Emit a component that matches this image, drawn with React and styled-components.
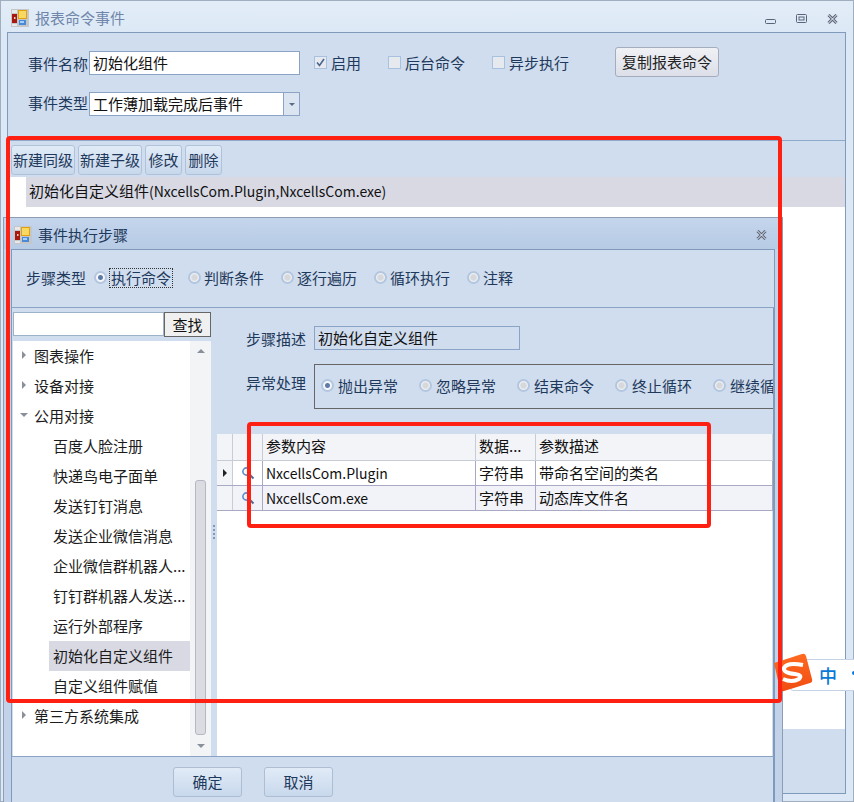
import React from "react";
import styled, { createGlobalStyle } from "styled-components";

const GlobalStyle = createGlobalStyle`
  html, body { margin: 0; padding: 0; background: #dfeaf6; }
  * { box-sizing: border-box; }
`;

const font = `"Noto Sans CJK SC", "Noto Sans", sans-serif`;

const Desktop = styled.div`
  position: relative;
  width: 854px;
  height: 802px;
  overflow: hidden;
  font-family: ${font};
  font-size: 15px;
  color: #1e395b;
`;

const Latin = styled.span`
  font-size: 14px;
`;

/* main window */
const MainWindow = styled.div`
  width: 854px;
  height: 802px;
  display: flex;
  flex-direction: column;
  background: linear-gradient(#e2edf8, #dce8f5 32px);
  border: 1px solid #a0aec0;
  padding: 0 7px 7px 6px;
`;

const TitleBar = styled.div`
  height: 31px;
  display: flex;
  align-items: center;
  gap: 6px;
  padding: 2px 0 0 4px;
  flex-shrink: 0;
  color: #6f86aa;
`;

const TitleSpacer = styled.div`
  flex: 1;
`;

const WinButtons = styled.div`
  display: flex;
  align-items: center;
  gap: 20px;
  padding-right: 8px;
  margin-top: 2px;
`;

const Frame = styled.div`
  flex: 1;
  display: flex;
  flex-direction: column;
  border: 1px solid #7f9aba;
  border-top: 0;
  min-height: 0;
`;

const TopPanel = styled.div`
  height: 109px;
  background: #d0ddee;
  border-top: 1px solid #7f9aba;
  border-bottom: 1px solid #8faac8;
  padding: 16px 0 0 20px;
  display: flex;
  flex-direction: column;
  gap: 15px;
`;

const Row = styled.div`
  display: flex;
  align-items: center;
`;

const Label = styled.span`
  white-space: nowrap;
  flex-shrink: 0;
  width: ${(p) => p.$w || 61}px;
  margin-top: ${(p) => -(p.$up || 0)}px;
  margin-bottom: ${(p) => p.$up || 0}px;
`;

const TextBox = styled.div`
  height: 24px;
  width: ${(p) => p.$w}px;
  flex-shrink: 0;
  background: ${(p) => p.$bg || "#fff"};
  border: 1px solid #8ba3c4;
  color: #111;
  line-height: 22px;
  padding-left: 3px;
  white-space: nowrap;
  overflow: hidden;
`;

const Combo = styled(TextBox)`
  display: flex;
  padding-right: 0;
  justify-content: space-between;
`;

const ComboArrow = styled.div`
  width: 16px;
  border-left: 1px solid #8ba3c4;
  background: #dbe5f2;
  display: flex;
  align-items: center;
  justify-content: center;
`;

const Caret = styled.i`
  width: 0;
  height: 0;
  border-left: 3px solid transparent;
  border-right: 3px solid transparent;
  border-top: 3px solid #5a6b85;
`;

const CheckItem = styled.div`
  display: flex;
  align-items: center;
  gap: 4px;
  margin: -1px 0 1px ${(p) => p.$ml}px;
  white-space: nowrap;
`;

const CheckBox = styled.div`
  width: 13px;
  height: 13px;
  border: 1px solid #a9c1e0;
  background: #e6e9ee;
  display: flex;
  align-items: center;
  justify-content: center;
`;

const CopyButton = styled.div`
  margin-left: 46px;
  margin-top: -2px;
  width: 104px;
  height: 30px;
  border: 1px solid #a5adbd;
  border-radius: 3px;
  background: linear-gradient(#f0f1f5, #dcdfe8);
  color: #222;
  display: flex;
  align-items: center;
  justify-content: center;
  padding-bottom: 2px;
`;

const ToolBar = styled.div`
  height: 36px;
  background: #d0ddee;
  display: flex;
  align-items: center;
  gap: 3px;
  padding: 2px 0 0 3px;
  flex-shrink: 0;
`;

const ToolButton = styled.div`
  height: 30px;
  border: 1px solid #b0c2da;
  border-radius: 3px;
  background: linear-gradient(#e1ebf7, #c8d8ec);
  display: flex;
  align-items: center;
  justify-content: center;
  padding-bottom: 2px;
  white-space: nowrap;
  width: ${(p) => p.$w}px;
`;

const EventList = styled.div`
  flex: 1;
  background: #fff;
  min-height: 0;
  display: flex;
  flex-direction: column;
`;

const EventRow = styled.div`
  margin-left: 18px;
  height: 30px;
  line-height: 28px;
  padding-left: 3px;
  background: #d8d9e3;
  color: #111;
`;

const FooterPanel = styled.div`
  height: 64px;
  background: #d0ddee;
  flex-shrink: 0;
`;

/* dialog over the main window */
const Dialog = styled.div`
  position: absolute;
  left: 3px;
  top: 217px;
  width: 780px;
  height: 600px;
  background: #c2d3e9;
  border: 1px solid #8c9db4;
  padding: 0 7px;
  display: flex;
  flex-direction: column;
`;

const DialogTitle = styled.div`
  height: 31px;
  flex-shrink: 0;
  margin: 0 -7px;
  padding: 2px 15px 0 10px;
  display: flex;
  align-items: center;
  gap: 6px;
  background: linear-gradient(#c4d5ec, #b7cbe5);
`;

const StepPanel = styled.div`
  height: 59px;
  flex-shrink: 0;
  background: #d0ddee;
  border: 1px solid #7f9aba;
  border-bottom: 1px solid #8ba3c4;
  display: flex;
  align-items: center;
  padding: 0 0 2px 14px;
`;

const RadioItem = styled.div`
  display: flex;
  align-items: center;
  gap: ${(p) => p.$gap || 3}px;
  margin-left: ${(p) => p.$ml}px;
  white-space: nowrap;
  flex-shrink: 0;
`;

const Radio = styled.div`
  width: 13px;
  height: 13px;
  border-radius: 50%;
  border: 2px solid #b3c6df;
  background: radial-gradient(circle, ${(p) => (p.$on ? "#5f7ca8 0 2px, #f4f6fa 3px" : "#d6d8dc 0 2.5px, #eef0f4 4px")});
  flex-shrink: 0;
`;

const FocusText = styled.span`
  outline: 1px dotted #333;
  outline-offset: 0;
  padding: 0 1px;
  line-height: 18px;
`;

const Body = styled.div`
  display: flex;
  min-height: 0;
  height: 449px;
  flex: none;
  background: #d0ddee;
  border-left: 1px solid #7f9aba;
  border-right: 2px solid #7f9aba;
  border-bottom: 1px solid #8ba3c4;
  padding-left: 1px;
`;

const LeftPane = styled.div`
  width: 198px;
  display: flex;
  flex-direction: column;
  padding-top: 4px;
  flex-shrink: 0;
`;

const SearchRow = styled.div`
  display: flex;
  height: 25px;
  margin-bottom: 4px;
`;

const SearchInput = styled.div`
  width: 151px;
  height: 24px;
  background: #fff;
  border: 1px solid #9fb2cc;
`;

const SearchButton = styled.div`
  width: 47px;
  height: 25px;
  background: #f0f0f0;
  border: 1px solid #666;
  color: #111;
  display: flex;
  align-items: center;
  justify-content: center;
  padding-bottom: 1px;
`;

const TreeBox = styled.div`
  flex: 1;
  display: flex;
  background: #fff;
  min-height: 0;
`;

const TreeList = styled.div`
  flex: 1;
  min-width: 0;
`;

const TreeItem = styled.div`
  height: 30px;
  display: flex;
  align-items: center;
  color: #1c1c1c;
  white-space: nowrap;
  margin-left: ${(p) => (p.$child ? 36 : 0)}px;
  padding-left: ${(p) => (p.$child ? 4 : 0)}px;
  padding-bottom: 2px;
  background: ${(p) => (p.$sel ? "#d8d9e3" : "transparent")};
`;

const Twist = styled.span`
  width: 21px;
  display: flex;
  justify-content: center;
  padding-left: 1px;
`;

const ArrowRight = styled.i`
  width: 0;
  height: 0;
  border-top: 4px solid transparent;
  border-bottom: 4px solid transparent;
  border-left: 4px solid ${(p) => p.$c || "#8a8f9c"};
`;

const ArrowDown = styled.i`
  width: 0;
  height: 0;
  border-left: 4px solid transparent;
  border-right: 4px solid transparent;
  border-top: 4px solid #8a8f9c;
`;

const ScrollBar = styled.div`
  width: 21px;
  flex-shrink: 0;
  background: #f3f4f6;
  display: flex;
  flex-direction: column;
  align-items: center;
  padding: 8px 0;
`;

const ArrowUp = styled.i`
  width: 0;
  height: 0;
  border-left: 4px solid transparent;
  border-right: 4px solid transparent;
  border-bottom: 4px solid #8a8f9c;
`;

const Thumb = styled.div`
  width: 11px;
  height: 255px;
  margin-top: 127px;
  margin-bottom: 9px;
  background: #dbdce2;
  border: 1px solid #b4b8c4;
  border-radius: 3px;
`;

const Splitter = styled.div`
  width: 6px;
  flex-shrink: 0;
  display: flex;
  flex-direction: column;
  align-items: center;
  justify-content: center;
  gap: 2px;
`;

const Dot = styled.i`
  width: 2px;
  height: 2px;
  background: #7f9aba;
`;

const RightPane = styled.div`
  flex: 1;
  min-width: 0;
  display: flex;
  flex-direction: column;
  overflow: hidden;
`;

const FieldRow = styled.div`
  display: flex;
  align-items: center;
  margin: 18px 0 0 29px;
  flex-shrink: 0;
`;

const GroupRow = styled(FieldRow)`
  margin-top: 14px;
`;

const GroupBox = styled.div`
  width: 460px;
  height: 45px;
  flex-shrink: 0;
  border: 1px solid #666;
  border-right: 0;
  display: flex;
  align-items: center;
  padding: 0 0 2px 6px;
  overflow: hidden;
`;

const Grid = styled.div`
  flex: 1;
  margin-top: 25px;
  background: #fff;
  margin-right: 1px;
  display: flex;
  flex-direction: column;
`;

const GridRow = styled.div`
  display: grid;
  grid-template-columns: 16px 30px 213px 60px 1fr;
  height: ${(p) => p.$h}px;
  flex-shrink: 0;
  background: ${(p) => p.$bg};
  border-bottom: 1px solid ${(p) => p.$line};
  width: 556px;
`;

const Cell = styled.div`
  display: flex;
  align-items: center;
  justify-content: ${(p) => (p.$center ? "center" : "flex-start")};
  padding-left: ${(p) => (p.$center ? 0 : 3)}px;
  padding-bottom: ${(p) => p.$pb || 0}px;
  border-right: 1px solid ${(p) => p.$line};
  background: ${(p) => p.$bg || "transparent"};
  color: #111;
  white-space: nowrap;
  overflow: hidden;
`;

const DialogFooter = styled.div`
  flex: 1;
  display: flex;
  gap: 22px;
  padding: 10px 0 0 161px;
  background: #d0ddee;
  border-left: 1px solid #7f9aba;
  border-right: 2px solid #7f9aba;
`;

const FooterButton = styled.div`
  width: 69px;
  height: 30px;
  border: 1px solid #aebdd2;
  border-radius: 3px;
  background: linear-gradient(#e1ebf7, #c8d8ec);
  display: flex;
  align-items: center;
  justify-content: center;
  padding-bottom: 2px;
`;

/* annotations drawn on top of the screenshot */
const RedBox = styled.div`
  position: absolute;
  left: ${(p) => p.$x}px;
  top: ${(p) => p.$y}px;
  width: ${(p) => p.$w}px;
  height: ${(p) => p.$h}px;
  border: 4px solid #ff2012;
  border-radius: 4px;
  pointer-events: none;
`;

const ImeBar = styled.div`
  position: absolute;
  left: 790px;
  top: 659px;
  width: 80px;
  height: 32px;
  background: #fff;
  border: 1px solid #c4d2e4;
  border-radius: 3px;
  display: flex;
  align-items: center;
  gap: 15px;
  padding-left: 28px;
  color: #0a78d8;
  font-size: 18px;
  font-weight: 500;
`;

const ImeDot = styled.i`
  width: 4px;
  height: 4px;
  border-radius: 50%;
  background: #0a78d8;
  margin-top: -5px;
`;

const ImeLogo = styled.svg`
  position: absolute;
  left: 772px;
  top: 652px;
`;

const AppIcon = () => (
  <svg width="18" height="18" viewBox="0 0 18 18" style={{ flexShrink: 0 }}>
    <rect width="18" height="18" fill="#c4c6c8" />
    <rect x="1" y="5" width="5" height="9" fill="#a8180e" />
    <rect x="3" y="8" width="1.5" height="2" fill="#f0d0c0" />
    <rect x="1" y="1" width="5" height="3" fill="#e8e8e8" />
    <rect x="1" y="15" width="5" height="2" fill="#e8e8e8" />
    <rect x="7" y="1" width="9" height="9" fill="#e0a010" />
    <rect x="8" y="2" width="7" height="7" fill="#f8d860" />
    <rect x="8" y="11" width="7" height="5" fill="#4a88d8" />
    <rect x="9" y="12" width="4" height="2" fill="#a8d0f4" />
  </svg>
);

const CloseIcon = () => (
  <svg width="11" height="10" viewBox="0 0 11 10" fill="none">
    <path d="M1.5 1 L9.5 9 M9.5 1 L1.5 9" stroke="#5a6478" strokeWidth="3" />
    <path d="M1.5 1 L9.5 9 M9.5 1 L1.5 9" stroke="#f4f6fa" strokeWidth="1" />
  </svg>
);

const Tick = () => (
  <svg width="9" height="9" viewBox="0 0 9 9" fill="none">
    <path d="M1 4.5 L3.5 7.5 L8 1" stroke="#4a6490" strokeWidth="1.6" />
  </svg>
);

const Lens = () => (
  <svg width="14" height="14" viewBox="0 0 14 14" fill="none">
    <circle cx="5.5" cy="5.5" r="3.6" stroke="#5a8ccc" strokeWidth="1.6" />
    <path d="M8.5 8.5 L12.5 12.5" stroke="#4a6a9a" strokeWidth="2" />
  </svg>
);

const treeItems = [
  { t: "图表操作", arrow: "r" },
  { t: "设备对接", arrow: "r" },
  { t: "公用对接", arrow: "d" },
  { t: "百度人脸注册", child: true },
  { t: "快递鸟电子面单", child: true },
  { t: "发送钉钉消息", child: true },
  { t: "发送企业微信消息", child: true },
  { t: "企业微信群机器人...", child: true },
  { t: "钉钉群机器人发送...", child: true },
  { t: "运行外部程序", child: true },
  { t: "初始化自定义组件", child: true, sel: true },
  { t: "自定义组件赋值", child: true },
  { t: "第三方系统集成", arrow: "r" },
];

const steps = [
  { t: "执行命令", on: true, ml: 8 },
  { t: "判断条件", ml: 16 },
  { t: "逐行遍历", ml: 17 },
  { t: "循环执行", ml: 17 },
  { t: "注释", ml: 17 },
];

const errorModes = ["抛出异常", "忽略异常", "结束命令", "终止循环", "继续循环"];

const params = [
  { v: "NxcellsCom.Plugin", d: "字符串", desc: "带命名空间的类名", bg: "#fff", cur: true },
  { v: "NxcellsCom.exe", d: "字符串", desc: "动态库文件名", bg: "#f1f3f9" },
];

export default function App() {
  return (
    <Desktop>
      <GlobalStyle />
      <MainWindow>
        <TitleBar>
          <AppIcon />
          <span>报表命令事件</span>
          <TitleSpacer />
          <WinButtons>
            <svg width="11" height="5" viewBox="0 0 11 5" fill="none" style={{ marginTop: 5 }}>
              <rect x="0.5" y="0.5" width="10" height="4" rx="1" stroke="#5a6478" />
            </svg>
            <svg width="11" height="9" viewBox="0 0 11 9" fill="none">
              <rect x="0.5" y="0.5" width="10" height="8" rx="1" stroke="#5a6478" />
              <rect x="3" y="3" width="5" height="3" stroke="#5a6478" />
            </svg>
            <CloseIcon />
          </WinButtons>
        </TitleBar>
        <Frame>
          <TopPanel>
            <Row>
              <Label>事件名称</Label>
              <TextBox $w={211}>初始化组件</TextBox>
              <CheckItem $ml={14}>
                <CheckBox><Tick /></CheckBox>
                启用
              </CheckItem>
              <CheckItem $ml={27}>
                <CheckBox />
                后台命令
              </CheckItem>
              <CheckItem $ml={27}>
                <CheckBox />
                异步执行
              </CheckItem>
              <CopyButton>复制报表命令</CopyButton>
            </Row>
            <Row>
              <Label $up={2}>事件类型</Label>
              <Combo $w={211}>
                工作薄加载完成后事件
                <ComboArrow><Caret /></ComboArrow>
              </Combo>
            </Row>
          </TopPanel>
          <ToolBar>
            <ToolButton $w={64}>新建同级</ToolButton>
            <ToolButton $w={64}>新建子级</ToolButton>
            <ToolButton $w={37}>修改</ToolButton>
            <ToolButton $w={37}>删除</ToolButton>
          </ToolBar>
          <EventList>
            <EventRow>初始化自定义组件<Latin>(NxcellsCom.Plugin,NxcellsCom.exe)</Latin></EventRow>
          </EventList>
          <FooterPanel />
        </Frame>
      </MainWindow>

      <Dialog>
        <DialogTitle>
          <AppIcon />
          <span>事件执行步骤</span>
          <TitleSpacer />
          <CloseIcon />
        </DialogTitle>
        <StepPanel>
          <span>步骤类型</span>
          {steps.map((s) => (
            <RadioItem key={s.t} $ml={s.ml}>
              <Radio $on={s.on} />
              {s.on ? <FocusText>{s.t}</FocusText> : s.t}
            </RadioItem>
          ))}
        </StepPanel>
        <Body>
          <LeftPane>
            <SearchRow>
              <SearchInput />
              <SearchButton>查找</SearchButton>
            </SearchRow>
            <TreeBox>
              <TreeList>
                {treeItems.map((i) => (
                  <TreeItem key={i.t} $child={i.child} $sel={i.sel}>
                    {!i.child && (
                      <Twist>{i.arrow === "d" ? <ArrowDown /> : <ArrowRight />}</Twist>
                    )}
                    {i.t}
                  </TreeItem>
                ))}
              </TreeList>
              <ScrollBar>
                <ArrowUp />
                <Thumb />
                <ArrowDown />
              </ScrollBar>
            </TreeBox>
          </LeftPane>
          <Splitter>
            <Dot /><Dot /><Dot /><Dot />
          </Splitter>
          <RightPane>
            <FieldRow>
              <Label $w={68}>步骤描述</Label>
              <TextBox $w={206} $bg="#d0ddee">初始化自定义组件</TextBox>
            </FieldRow>
            <GroupRow>
              <Label $w={68} $up={4}>异常处理</Label>
              <GroupBox>
                {errorModes.map((m, i) => (
                  <RadioItem key={m} $gap={4} $ml={i === 0 ? 0 : 21}>
                    <Radio $on={i === 0} />
                    {m}
                  </RadioItem>
                ))}
              </GroupBox>
            </GroupRow>
            <Grid>
              <GridRow $h={27} $bg="#f3f4f7" $line="#c8ccd6">
                <Cell $line="#c8ccd6" />
                <Cell $line="#c8ccd6" />
                <Cell $line="#c8ccd6" $pb={3}>参数内容</Cell>
                <Cell $line="#c8ccd6" $pb={3}>数据...</Cell>
                <Cell $line="#c8ccd6" $pb={3}>参数描述</Cell>
              </GridRow>
              {params.map((p) => (
                <GridRow key={p.v} $h={25} $bg={p.bg} $line="#a9a9c6">
                  <Cell $center $bg="#f3f4f7" $line="#c8ccd6">
                    {p.cur && <ArrowRight $c="#222" />}
                  </Cell>
                  <Cell $center $line="#a9a9c6"><Lens /></Cell>
                  <Cell $line="#a9a9c6" $pb={1}><Latin>{p.v}</Latin></Cell>
                  <Cell $line="#a9a9c6" $pb={1}>{p.d}</Cell>
                  <Cell $line="#a9a9c6" $pb={1}>{p.desc}</Cell>
                </GridRow>
              ))}
            </Grid>
          </RightPane>
        </Body>
        <DialogFooter>
          <FooterButton>确定</FooterButton>
          <FooterButton>取消</FooterButton>
        </DialogFooter>
      </Dialog>

      <ImeBar>
        中
        <ImeDot />
      </ImeBar>
      <ImeLogo width="42" height="42" viewBox="0 0 42 42">
        <defs>
          <linearGradient id="imeFill" x1="0" y1="0" x2="0" y2="1">
            <stop offset="0" stopColor="#ff6a20" />
            <stop offset="1" stopColor="#f04c12" />
          </linearGradient>
        </defs>
        <path d="M2 11 L30 2 Q33 1 34 4 L40 27 Q41 30 38 31 L12 39 Q9 40 8 37 Z" fill="url(#imeFill)" />
        <path d="M31 13 Q15 10 12 16 Q11 21 23 22 Q31 23 27 27 Q20 31 11 27" fill="none" stroke="#fff" strokeWidth="4" />
      </ImeLogo>

      <RedBox $x={6} $y={136} $w={776} $h={567} />
      <RedBox $x={247} $y={422} $w={464} $h={106} />
    </Desktop>
  );
}
